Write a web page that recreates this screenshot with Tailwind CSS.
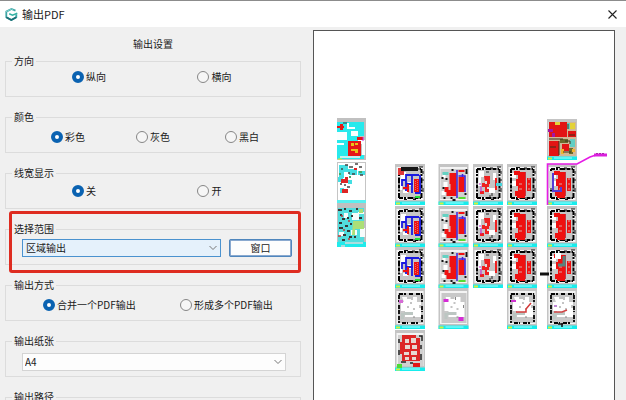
<!DOCTYPE html>
<html lang="zh-CN">
<head>
<meta charset="utf-8">
<meta name="viewport" content="width=device-width, initial-scale=1">
<title>输出PDF</title>
<script src="https://cdn.jsdelivr.net/npm/@tailwindcss/browser@4"></script>
</head>
<body class="flex h-screen flex-col overflow-hidden bg-[#f0f0f0] font-['Noto_Sans_CJK_SC',sans-serif] text-[10px] leading-[14px] text-[#1a1a1a]">
<header class="flex h-[27px] shrink-0 items-center border-t border-[#8c8c8c] bg-white pl-[5px] pr-2">
  <svg class="mr-1 size-[13px]" viewBox="0 0 13 13" fill="none" aria-hidden="true">
    <path d="M10.500 2.700 6.500 1 1.300 3.600v5.600l5 2.800 5-2.700V6.300" stroke="#3fa5a5" stroke-width="1.800"/>
    <path d="M1.300 9.200l5 2.800 5-2.700" stroke="#1c6f76" stroke-width="1.800"/>
    <path d="M12.300 5.200 7.500 7.300 4.200 5.800" stroke="#35b3a4" stroke-width="1.500"/>
    <path d="M1 3.800 6.300 1l2 1" stroke="#7bcfcb" stroke-width="1"/>
  </svg>
  <h1 class="flex-1 text-[11px]">输出PDF</h1>
  <button type="button" aria-label="关闭" class="flex size-3 items-center justify-center">
    <svg class="size-[9px]" viewBox="0 0 9 9" stroke="#222" stroke-width="1.100"><path d="M.5.5l8 8M8.500.5l-8 8"/></svg>
  </button>
</header>

<main class="grid min-h-0 flex-1 grid-cols-2">
  <form class="flex flex-col gap-[13px] overflow-hidden pl-[5px] pr-3 pt-[10px]">
    <h2 class="-mb-[10px] text-center leading-[14px]">输出设置</h2>

    <fieldset class="h-[43px] shrink-0 border border-[#dcdcdc]">
      <legend class="ml-1.5 px-0.5">方向</legend>
      <div class="grid grid-cols-[126fr_103fr] pl-[66px] pt-[2px]">
        <label class="flex items-center gap-0.5"><input type="radio" name="dir" checked class="size-3 appearance-none rounded-full border border-[#868686] bg-[#f6f6f6] checked:border-4 checked:border-[#0a62b1] checked:bg-white">纵向</label>
        <label class="flex items-center gap-0.5"><input type="radio" name="dir" class="size-3 appearance-none rounded-full border border-[#868686] bg-[#f6f6f6] checked:border-4 checked:border-[#0a62b1] checked:bg-white">横向</label>
      </div>
    </fieldset>

    <fieldset class="h-[43px] shrink-0 border border-[#dcdcdc]">
      <legend class="ml-1.5 px-0.5">颜色</legend>
      <div class="grid grid-cols-[85fr_89fr_75fr] pl-[45px] pt-[6px]">
        <label class="flex items-center gap-0.5"><input type="radio" name="color" checked class="size-3 appearance-none rounded-full border border-[#868686] bg-[#f6f6f6] checked:border-4 checked:border-[#0a62b1] checked:bg-white">彩色</label>
        <label class="flex items-center gap-0.5"><input type="radio" name="color" class="size-3 appearance-none rounded-full border border-[#868686] bg-[#f6f6f6] checked:border-4 checked:border-[#0a62b1] checked:bg-white">灰色</label>
        <label class="flex items-center gap-0.5"><input type="radio" name="color" class="size-3 appearance-none rounded-full border border-[#868686] bg-[#f6f6f6] checked:border-4 checked:border-[#0a62b1] checked:bg-white">黑白</label>
      </div>
    </fieldset>

    <fieldset class="h-[43px] shrink-0 border border-[#dcdcdc]">
      <legend class="ml-1.5 px-0.5">线宽显示</legend>
      <div class="grid grid-cols-[126fr_103fr] pl-[66px] pt-[4px]">
        <label class="flex items-center gap-0.5"><input type="radio" name="lw" checked class="size-3 appearance-none rounded-full border border-[#868686] bg-[#f6f6f6] checked:border-4 checked:border-[#0a62b1] checked:bg-white">关</label>
        <label class="flex items-center gap-0.5"><input type="radio" name="lw" class="size-3 appearance-none rounded-full border border-[#868686] bg-[#f6f6f6] checked:border-4 checked:border-[#0a62b1] checked:bg-white">开</label>
      </div>
    </fieldset>

    <div class="relative shrink-0">
      <fieldset class="h-[43px] border border-[#dcdcdc]">
        <legend class="ml-1.5 px-0.5">选择范围</legend>
        <div class="flex gap-2 pl-4 pr-2 pt-[3px]">
          <div class="relative flex-1">
            <select aria-label="选择范围" class="block h-[18px] w-full appearance-none border border-[#4a92cf] bg-[#e5f1fb] pl-[3px] leading-[14px] outline-none"><option>区域输出</option></select>
            <svg class="pointer-events-none absolute right-1 top-1.5 h-[6px] w-2" viewBox="0 0 8 6" fill="none" stroke="#777"><path d="M.5 1 4 4.500 7.500 1"/></svg>
          </div>
          <button type="button" class="h-[18px] w-[63px] rounded-[2px] border-2 border-[#8aa9cf] bg-[#fdfdfd] leading-[14px] outline-1 -outline-offset-1 outline-[#4f86bd]">窗口</button>
        </div>
      </fieldset>
      <div class="pointer-events-none absolute -bottom-2 -top-[11px] left-1 right-0 rounded-[3px] border-[3px] border-[#de2c20]"></div>
    </div>

    <fieldset class="h-[43px] shrink-0 border border-[#dcdcdc]">
      <legend class="ml-1.5 px-0.5">输出方式</legend>
      <div class="grid grid-cols-[137fr_120fr] pl-[37px] pt-[6px]">
        <label class="flex items-center gap-0.5 whitespace-nowrap"><input type="radio" name="mode" checked class="size-3 appearance-none rounded-full border border-[#868686] bg-[#f6f6f6] checked:border-4 checked:border-[#0a62b1] checked:bg-white">合并一个PDF输出</label>
        <label class="flex items-center gap-0.5 whitespace-nowrap"><input type="radio" name="mode" class="size-3 appearance-none rounded-full border border-[#868686] bg-[#f6f6f6] checked:border-4 checked:border-[#0a62b1] checked:bg-white">形成多个PDF输出</label>
      </div>
    </fieldset>

    <fieldset class="h-[43px] shrink-0 border border-[#dcdcdc]">
      <legend class="ml-1.5 px-0.5">输出纸张</legend>
      <div class="relative ml-4 mr-[14px] mt-[5px]">
        <select aria-label="输出纸张" class="block h-[18px] w-full appearance-none border border-[#d4d4d4] bg-[#fdfdfd] pl-0.5 leading-[14px]"><option>A4</option></select>
        <svg class="pointer-events-none absolute right-1 top-1.5 h-[6px] w-2" viewBox="0 0 8 6" fill="none" stroke="#777"><path d="M.5 1 4 4.500 7.500 1"/></svg>
      </div>
    </fieldset>

    <fieldset class="h-[43px] shrink-0 border border-[#dcdcdc]">
      <legend class="ml-1.5 px-0.5">输出路径</legend>
    </fieldset>
  </form>

  <section aria-label="预览" class="mr-[11px] mt-[3px] min-h-0 overflow-hidden border border-b-0 border-[#555] bg-white">
    <svg class="block h-full w-full" viewBox="314 31 300 369" preserveAspectRatio="xMidYMin meet" role="img" aria-label="图纸预览">
      <defs>
        <g id="sheet">
          <rect width="30" height="41" fill="#c4c4c4"/>
          <rect x="1.500" y="3" width="27" height="33" fill="#f4f4f4"/>
          <rect y="37.500" width="30" height="3.500" fill="#18ecec"/>
          <path d="M7 39h18" stroke="#a5ffff"/>
          <path d="M1 39.500h4" stroke="#d5f03c" stroke-width="2"/>
        </g>
        <g id="walls">
          <rect x="5" y="6" width="21" height="27" fill="#c6c6c6"/>
          <path d="M4 5h22M26.500 5v29M4 34h22M4 5v29" fill="none" stroke="#000" stroke-width="2" stroke-dasharray="4 1 2 1.500 6 1"/>
          <path d="M9 3.500h4M17 4h3M24 3h4M28 7v3M28 15v2M28 24v4M9 35.500h3M18 35.500h3" stroke="#111"/>
        </g>
        <g id="plan-blue">
          <use href="#sheet"/><use href="#walls"/>
          <path d="M6 8h5v9H7v9H5v-8M8 26h5v3H8zM13 18h3v4h-3z" fill="#fff"/>
          <path d="M11 27V11h13M17 11v18M11 16h-4v6M11 20h7M20 29h5V11" fill="none" stroke="#1a1ae0" stroke-width="1.800"/>
          <path d="M19 15h5v13h-5zM8 23h6v2H8zM12 20h2v8h-2z" fill="#ef1212"/>
          <path d="M20.500 17v10M22.500 16v11" stroke="#d7a8a8" stroke-width=".6" stroke-dasharray="1 1"/>
          <path d="M20 32h5v2h-5z" fill="#20dd38"/>
        </g>
        <g id="plan-mixed">
          <use href="#sheet"/>
          <rect x="2" y="5" width="26" height="30" fill="#d0d0d0"/>
          <path d="M4 10h3v4H4zM5 18h4v5H5zM3 27h4v4H3z" fill="#fff"/>
          <path d="M11 9h7v23H8v-4H6v-5h5zM20 13h6v15h-6zM20 6h6v2h-6z" fill="#ef1212"/>
          <path d="M10 20h2v6h-2z" fill="#d6bcbc"/>
          <path d="M18.500 6v28M20 12h6.500v16M24 10v3" fill="none" stroke="#3a22dd" stroke-width="1.500"/>
          <path d="M4 8h6v3H4z" fill="#65d1c2"/>
          <path d="M20 33h7v2h-7z" fill="#55dd31"/>
          <path d="M3 14h2M7 15h2M4 24h2M13 6h2M12 34h2M26 30h2M27 9h2M5 34h2M28 5v3M14 36h3" stroke="#161616" stroke-width="1.800"/>
        </g>
        <g id="plan-light">
          <use href="#sheet"/><use href="#walls"/>
          <path d="M6 7h5v6H8v9H5M20 9h3v7h-3zM16 24h6v5h-6z" fill="#fff"/>
          <path d="M11 12h6v8h-1v8h-4v-5H9v-4h3zM22 14h2v12h-2zM7 27h4v3H7z" fill="#ee2020"/>
          <path d="M12 17h2v3h-2zM14 23h2v2h-2z" fill="#ddd"/>
          <path d="M8 22v6M6 20h2" stroke="#c21cd2"/>
          <path d="M17 31v2M19 29v3M13 8h3" stroke="#222"/>
        </g>
        <g id="plan-red">
          <use href="#sheet"/><use href="#walls"/>
          <path d="M5 9h4v5H5zM5 17h4v5H5z" fill="#fff"/>
          <path d="M11 8h7v24H8v-5h3v-5H9v-7h2zM20 14h4v13h-4zM7 7h6v4H7zM10 31h8v3h-8z" fill="#ef1010"/>
          <path d="M12 20h3M12 25h3M22 14v2M22 19v2M22 24v2" stroke="#d8a5a5"/>
          <path d="M18.500 8v24" stroke="#c43845"/>
        </g>
        <g id="plan-roof">
          <use href="#sheet"/>
          <rect x="3" y="5" width="25" height="30" fill="#c8c8c8"/>
          <path d="M7 9h15v5h4v15H10v-6H6v-9h3z" fill="#fff"/>
          <path d="M9 24h9v3H9zM6 25h3v6H6z" fill="#bcc6c2"/>
          <path d="M12 10h4M17 9v3M12 19h2M18 21h2M15 15h2M18 29h2M25 17v3" stroke="#888"/>
        </g>
        <path id="roof-wall" d="M4 6h7M14 6h5M21 6h6M4 7v7M4 17v9M4 28v7M27 7v7M27 18v6M27 27v7M7 35h6M16 35h7" fill="none" stroke="#050505" stroke-width="1.800" stroke-dasharray="4 1"/>
      </defs>

      <g transform="translate(337 118)">
        <rect width="29" height="42" fill="#c0c0c0"/>
        <path d="M0 4h27v14h-4v15h-3v4h7v4H0z" fill="#27e9ec"/>
        <path d="M10 5h2v4h6v2h-8zM0 14h10v8H0zM14 13h7v5h-7zM0 25h7v2H0zM21 22h7v15h-3V26h-4z" fill="#fafefe"/>
        <path d="M11 23h13v15H11zM20 19h6v3h-6zM0 8h7v2h-7zM3 6h3v6H3z" fill="#e51717"/>
        <path d="M14 25h3v3h-3zM18 25h3v2h-3zM14 31h7v4h-3v-2h-4z" fill="#e8c318"/>
        <path d="M3 39h20" stroke="#c7eeee" stroke-width="2"/>
        <path d="M1 41h4" stroke="#d8f020"/><path d="M26 19v4" stroke="#d219dc"/><path d="M6 5h4" stroke="#333"/>
      </g>
      <g transform="translate(337 162)">
        <rect x=".5" y=".5" width="28" height="39" fill="#fff" stroke="#c5c5c5"/>
        <path d="M2 3h9v4h9v6h-8v-3H7v6H2zM21 9h7v4h-7zM1 15h5v5H1zM3 26h4v5H3zM11 18h4v4h-4z" fill="#43dfe3"/>
        <path d="M4 17h7v4H4zM8 15h3v4H8zM5 27h6v4H5zM17 6h3v2h-3z" fill="#dd2525"/>
        <path d="M8 3h3M12 5h4M18 2h3M4 7h2M11 11h2M15 12h3M22 5h3M7 23h2M3 22h2M23 13h3M10 25h3" stroke="#464646" stroke-width="1.500"/>
        <path d="M12 15h2M2 12h2M22 10h3" stroke="#48a866" stroke-width="1.800"/>
        <rect y="38" width="29" height="3" fill="#58f0f0"/>
      </g>
      <g transform="translate(337 203)">
        <rect width="29" height="44" fill="#c0c0c0"/>
        <path d="M1 5h26v34H1z" fill="#52dddd"/>
        <path d="M7 10h4v5H7zM15 10h7v7h-7zM14 27h6v5h-6zM2 29h5v4H2zM21 9h6v2h-6zM23 25h5v9h-5z" fill="#f8fcfc"/>
        <path d="M16 18h11v8h-9v6h-3zM22 6h4v4h-4z" fill="#acdf77"/>
        <path d="M1 7h4M7 6h2M12 8h3M3 12h2M5 16h3M10 15h2M2 20h3M8 23h3M13 21h2M2 25h4M10 28h3M6 32h3M12 34h3M5 37h3M17 34h2M14 13h2M22 15h3M19 6h2" stroke="#363636" stroke-width="2"/>
        <path d="M4 13h2M11 18h2M6 27h2M1 33h3M11 36h2" stroke="#bf3838" stroke-width="1.500"/>
        <path d="M0 41.500h29" stroke="#20ebeb" stroke-width="5"/>
        <path d="M8 40h18M4 43h4" stroke="#d9dada" stroke-width="1.500"/>
      </g>

      <use href="#plan-blue" x="395" y="164"/>
      <path d="M398 168h6v7h-6z" fill="#df3838"/><path d="M401 167h17v4h-17z" fill="#161616"/>
      <use href="#plan-blue" x="395" y="206"/>
      <use href="#plan-blue" x="395" y="247"/>
      <g transform="translate(395 288)"><use href="#plan-roof"/><use href="#roof-wall"/><path d="M4 12h4v3H4z" fill="#d66ad6"/></g>
      <g transform="translate(395 330)">
        <use href="#sheet"/>
        <rect x="3" y="5" width="25" height="31" fill="#d0d0d0"/>
        <path d="M7 5h14v3h4v23H7v-7H5V12h2z" fill="#dc2626"/>
        <path d="M10 9h4v4h-4zM16 8h5v5h-5zM10 15h5v4h-5zM17 15h5v4h-5zM9 22h5v3H9zM16 21h6v4h-6zM10 27h4v3h-4zM17 27h4v3h-4z" fill="#e7d8d2"/>
        <path d="M4 9v4M4 20v5M24 6h3v5M26 15v4M26 24v6M6 32h5M15 33h3" fill="none" stroke="#242424" stroke-width="1.500"/>
        <path d="M18 33h7v4h-7z" fill="#e21818"/><path d="M2 34h5v4H2z" fill="#4bdc35"/>
      </g>

      <use href="#plan-mixed" x="438.500" y="164"/>
      <use href="#plan-mixed" x="438.500" y="206"/>
      <use href="#plan-mixed" x="438.500" y="247"/>
      <g transform="translate(438.500 288)"><use href="#plan-roof"/><path d="M5 11h5v3H5zM20 29h5v4h-5z" fill="#d62bd6"/></g>

      <use href="#plan-light" x="473" y="164"/>
      <path d="M496 183h6v3h-6z" fill="#46d3da"/>
      <use href="#plan-light" x="473" y="206"/>
      <use href="#plan-light" x="473" y="247"/>

      <use href="#plan-red" x="507" y="164"/>
      <use href="#plan-red" x="507" y="206"/>
      <use href="#plan-red" x="507" y="247"/>
      <g transform="translate(507 288)"><use href="#plan-roof"/><use href="#roof-wall"/><path d="M9 24h10v-3l5-6" fill="none" stroke="#d33a3a" stroke-width="1.500"/><path d="M4 13h5" stroke="#d034d0" stroke-width="2"/></g>

      <g transform="translate(547 119)">
        <use href="#sheet"/>
        <rect x="2" y="3" width="27" height="34" fill="#d0b896"/>
        <path d="M2 3h18v15H2zM2 22h10v15H2zM21 12h8v6h-8zM15 25h7v7h-7z" fill="#e21414"/>
        <path d="M8 3h5v3H8zM23 4h5v6h-5z" fill="#e3d238"/>
        <path d="M20 4h3v6h-3zM23 20h5v8h-5z" fill="#62cec4"/>
        <path d="M13 20h8v4h-8zM22 29h4v6h-4z" fill="#6b6b2d"/>
        <path d="M14 30h3v5h-3zM25 30h3v3h-3z" fill="#efb530"/>
        <path d="M1 10h5v3H1zM5 14h3v4H5z" fill="#a316a5"/>
        <path d="M2 20h14M12 22v14M18 22h5v3M21 5v5M22 16h6M3 28h6M16 33h8" fill="none" stroke="#3a321d"/>
      </g>
      <use href="#plan-red" x="547" y="164"/>
      <path d="M549 171h5v17h-5z" fill="#d5d5d5"/><path d="M553 173v18h8v-4" fill="none" stroke="#563bd4" stroke-width="2"/>
      <path d="M547.500 205v-41H577l13-7 6-2" fill="none" stroke="#e51be5" stroke-width="1.600"/>
      <path d="M594 155h13" stroke="#d920dc" stroke-width="3"/><path d="M596 153.500h9" stroke="#ad24ae" stroke-dasharray="2 1"/>
      <use href="#plan-red" x="547" y="206"/>
      <use href="#plan-red" x="547" y="247"/>
      <path d="M555 253h6v6h-6z" fill="#fff"/><path d="M564 256v9h-6" fill="none" stroke="#57837e" stroke-width="3"/>
      <path d="M540 274h9" stroke="#111" stroke-width="3"/>
      <g transform="translate(547 288)"><use href="#plan-roof"/><use href="#roof-wall"/><path d="M7 24h8l5-2" fill="none" stroke="#cf4343" stroke-width="1.500"/><path d="M7 18h3" stroke="#aa61c5" stroke-width="1.500"/><path d="M15 35v4M11 36h5" stroke="#111" stroke-width="1.500"/></g>
    </svg>
  </section>
</main>
</body>
</html>
